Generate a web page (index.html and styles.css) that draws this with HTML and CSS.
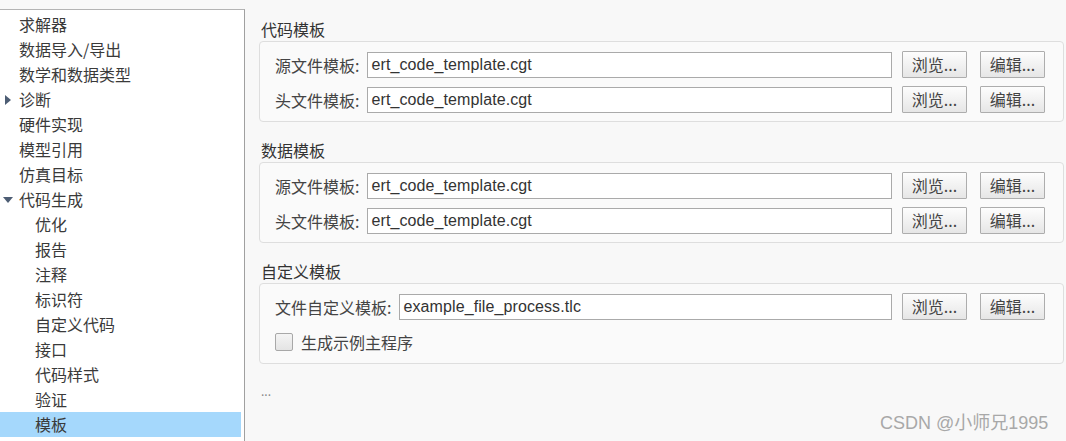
FILE: index.html
```html
<!DOCTYPE html>
<html lang="zh">
<head>
<meta charset="utf-8">
<link rel="stylesheet" href="styles.css">
</head>
<body>
<div class="app">
  <nav class="tree">
    <div class="item">求解器</div>
    <div class="item">数据导入/导出</div>
    <div class="item">数学和数据类型</div>
    <div class="item"><span class="tri tri-right"></span>诊断</div>
    <div class="item">硬件实现</div>
    <div class="item">模型引用</div>
    <div class="item">仿真目标</div>
    <div class="item"><span class="tri tri-down"></span>代码生成</div>
    <div class="item child">优化</div>
    <div class="item child">报告</div>
    <div class="item child">注释</div>
    <div class="item child">标识符</div>
    <div class="item child">自定义代码</div>
    <div class="item child">接口</div>
    <div class="item child">代码样式</div>
    <div class="item child">验证</div>
    <div class="item child selected">模板</div>
  </nav>
  <main class="content">
    <section class="section first">
      <h2 class="heading">代码模板</h2>
      <div class="box">
        <div class="row">
          <label class="label">源文件模板:</label>
          <div class="field">ert_code_template.cgt</div>
          <button class="btn browse">浏览...</button>
          <button class="btn edit">编辑...</button>
        </div>
        <div class="row">
          <label class="label">头文件模板:</label>
          <div class="field">ert_code_template.cgt</div>
          <button class="btn browse">浏览...</button>
          <button class="btn edit">编辑...</button>
        </div>
      </div>
    </section>
    <section class="section">
      <h2 class="heading">数据模板</h2>
      <div class="box">
        <div class="row">
          <label class="label">源文件模板:</label>
          <div class="field">ert_code_template.cgt</div>
          <button class="btn browse">浏览...</button>
          <button class="btn edit">编辑...</button>
        </div>
        <div class="row">
          <label class="label">头文件模板:</label>
          <div class="field">ert_code_template.cgt</div>
          <button class="btn browse">浏览...</button>
          <button class="btn edit">编辑...</button>
        </div>
      </div>
    </section>
    <section class="section">
      <h2 class="heading">自定义模板</h2>
      <div class="box">
        <div class="row">
          <label class="label">文件自定义模板:</label>
          <div class="field">example_file_process.tlc</div>
          <button class="btn browse">浏览...</button>
          <button class="btn edit">编辑...</button>
        </div>
        <div class="row check-row">
          <span class="checkbox"></span>
          <span class="check-label">生成示例主程序</span>
        </div>
      </div>
    </section>
    <div class="more">...</div>
  </main>
</div>
<div class="watermark">CSDN @小师兄1995</div>
</body>
</html>
```

FILE: styles.css
```css
html, body {
  margin: 0;
  padding: 0;
}
body {
  width: 1066px;
  height: 441px;
  overflow: hidden;
  background: #f8f8f8;
  font-family: "Noto Sans CJK SC", "Liberation Sans", sans-serif;
  color: #333;
  position: relative;
}
.app {
  display: flex;
  height: 441px;
}
.tree {
  margin-top: 9px;
  width: 241px;
  padding: 2px 3px 0 0;
  background: #fff;
  border-top: 1px solid #b4b4b4;
  border-right: 1px solid #a0a0a0;
  flex: none;
}
.item {
  height: 25px;
  line-height: 25px;
  font-size: 16px;
  padding-left: 19px;
  position: relative;
  white-space: nowrap;
  color: #3a3a3a;
}
.item.child {
  padding-left: 35px;
}
.item.selected {
  background: #a5d8fc;
}
.tri {
  position: absolute;
  width: 0;
  height: 0;
}
.tri-right {
  left: 5px;
  top: 8px;
  border-top: 5px solid transparent;
  border-bottom: 5px solid transparent;
  border-left: 6px solid #4d5d74;
}
.tri-down {
  left: 3px;
  top: 10px;
  border-left: 5px solid transparent;
  border-right: 5px solid transparent;
  border-top: 6px solid #4d5d74;
}
.content {
  flex: 1;
  padding: 18px 2px 0 14px;
}
.section {
  margin-top: 17px;
}
.section.first {
  margin-top: 0;
}
.heading {
  margin: 0 0 1px 0;
  padding-left: 2px;
  font-size: 16px;
  font-weight: normal;
  line-height: 22px;
  height: 22px;
  color: #333;
}
.box {
  background: #fafafa;
  border: 1px solid #dedede;
  border-radius: 4px;
  padding: 9px 18px 8px 15px;
  display: flex;
  flex-direction: column;
  gap: 8px;
}
.row {
  display: flex;
  align-items: center;
  height: 27px;
}
.label {
  font-size: 16px;
  color: #444;
  margin-right: 8px;
  white-space: nowrap;
}
.field {
  flex: 1;
  height: 24px;
  line-height: 24px;
  background: #fff;
  border: 1px solid #aaa;
  padding-left: 3px;
  font-family: "Liberation Sans", "Noto Sans CJK SC", sans-serif;
  font-size: 16px;
  letter-spacing: 0.1px;
  color: #333;
  white-space: nowrap;
  overflow: hidden;
}
.btn {
  height: 27px;
  box-sizing: border-box;
  border: 1px solid #adadad;
  border-radius: 1px;
  background: linear-gradient(#fdfdfd, #e6e6e6);
  font-family: "Noto Sans CJK SC", sans-serif;
  font-size: 16px;
  color: #444;
  padding: 0;
  line-height: 25px;
}
.btn.browse {
  width: 65px;
  margin-left: 10px;
}
.btn.edit {
  width: 65px;
  margin-left: 13px;
}
.check-row {
  gap: 8px;
}
.checkbox {
  width: 16px;
  height: 16px;
  border: 1px solid #a8a8a8;
  border-radius: 2px;
  background: linear-gradient(#f4f4f4, #e4e4e4);
}
.check-label {
  font-size: 16px;
  color: #444;
}
.more {
  margin-top: 20px;
  padding-left: 2px;
  font-size: 12px;
  color: #888;
  line-height: 14px;
}
.watermark {
  position: absolute;
  left: 880px;
  top: 412px;
  font-family: "Liberation Sans", "Noto Sans CJK SC", sans-serif;
  font-size: 18px;
  line-height: 22px;
  color: #a8a8a8;
  white-space: nowrap;
}
```
